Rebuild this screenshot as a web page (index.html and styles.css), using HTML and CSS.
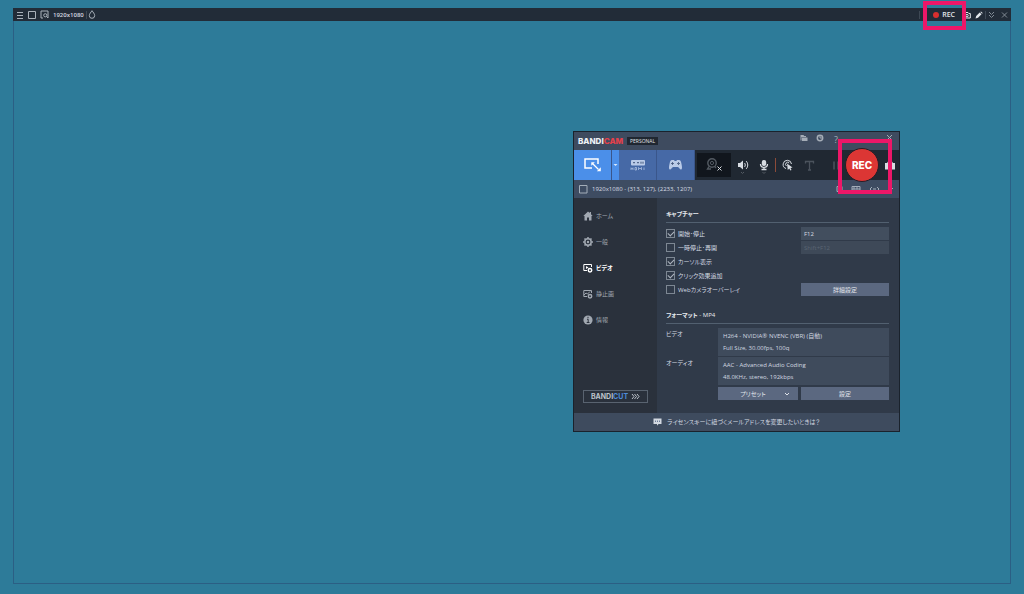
FILE: index.html
```html
<!DOCTYPE html>
<html lang="ja">
<head>
<meta charset="utf-8">
<title>Bandicam</title>
<link rel="stylesheet" href="styles.css">
</head>
<body>
<main class="desktop">
  <section class="capture">
    <header class="bar">
      <button class="ib" aria-label="メニュー"><svg width="8" height="8" viewBox="0 0 8 8"><path d="M1 1.500h6M1 4.500h6M1 7.500h6"/></svg></button>
      <button class="ib" aria-label="領域"><svg width="8" height="8" viewBox="0 0 8 8"><path d="M.5.500h7v7h-7z"/></svg></button>
      <button class="ib" aria-label="拡大"><svg width="9" height="9" viewBox="0 0 9 9"><path d="M3 8H1V1h7v7M6.500 6.500L8 8"/><circle cx="5.300" cy="5.300" r="1.600"/></svg></button>
      <span class="size">1920x1080</span>
      <i class="sep tight"></i>
      <button class="ib" aria-label="不透明度"><svg width="8" height="9" viewBox="0 0 8 9"><path d="M4 .7C3 2.300 1.300 3.800 1.300 5.600a2.700 2.700 0 0 0 5.400 0C6.700 3.800 5 2.300 4 .7z"/></svg></button>
      <span class="grow"></span>
      <i class="sep"></i>
      <button class="rec-small"><i class="dot"></i>REC</button>
      <button class="ib bright" aria-label="スクリーンショット"><svg width="8" height="8" viewBox="0 0 8 8"><path d="M.7 2.500h1.500l.8-1h2l.8 1h1.500V7H.7z"/><circle cx="4" cy="4.600" r="1.200"/></svg></button>
      <button class="ib bright" aria-label="描画"><svg class="solid" width="8" height="8" viewBox="0 0 8 8"><path d="M.5 7.500L1.200 5l3.500-3.500 1.800 1.800L3 6.800zM5.300 1L6 .4l1.700 1.700-.6.700z"/></svg></button>
      <i class="sep tight"></i>
      <button class="ib dim" aria-label="折りたたむ"><svg width="7" height="8" viewBox="0 0 7 8"><path d="M1 1l2.500 2.500L6 1M1 4l2.500 2.500L6 4"/></svg></button>
      <button class="ib dim" aria-label="閉じる"><svg width="7" height="8" viewBox="0 0 7 8"><path d="M1 1.500l5 5M6 1.500l-5 5"/></svg></button>
    </header>
  </section>

  <section class="app">
    <header class="title">
      <b class="logo">BANDI<span class="red">CAM</span></b>
      <span class="badge">PERSONAL</span>
      <span class="grow"></span>
      <button class="ib" aria-label="フォルダー"><svg class="solid" width="8" height="8" viewBox="0 0 8 8"><path d="M.5 1h3l.7 1H6v1H1.500v3.500h-1zM2 3.500h5.500V7H2z"/></svg></button>
      <button class="ib" aria-label="履歴"><svg width="8" height="8" viewBox="0 0 8 8"><circle cx="4" cy="4" r="2.700" stroke-width="1.500"/><path d="M4 2v2h2"/></svg></button>
      <button class="ib help" aria-label="ヘルプ">?</button>
      <button class="ib close" aria-label="閉じる"><svg width="7" height="7" viewBox="0 0 7 7"><path d="M1 1l5 5M6 1L1 6"/></svg></button>
    </header>

    <nav class="tools">
      <button class="mode on" aria-label="画面録画"><svg width="18" height="14" viewBox="0 0 18 14"><path stroke-width="1.500" d="M8 10H1V1h13v5"/><path stroke-width="1.300" d="M8.500 5.500l6 6"/><path class="fill" d="M7.300 4.300h3.500L7.300 7.800zM16.800 13.300h-4l4-4z"/></svg></button>
      <button class="drop" aria-label="録画モード"><svg width="5" height="4" viewBox="0 0 5 4"><path class="fill" d="M.5 1h4L2.500 3z"/></svg></button>
      <button class="mode" aria-label="HDMI"><svg width="16" height="12" viewBox="0 0 16 12"><rect class="fill" x="1" y="1" width="14" height="5.500" rx="1"/><path class="ink" d="M3 3.700h2M7 3.700h2M11 2.700v2M13 2.700v2"/><path stroke-width=".7" d="M1 8.500v2.500M3 8.500v2.500M1 9.700h2M5 8.500v2.500h1.500v-2.500zM8.500 11V8.500L10 10l1.500-1.500V11M14 8.500V11"/></svg></button>
      <button class="mode" aria-label="ゲーム録画"><svg width="15" height="12" viewBox="0 0 15 12"><path class="fill" d="M4 1h2l.7 1h1.600L9 1h2c1.500 0 2 1.500 2.500 4 .5 2 .9 5-.2 5.500C12 11 10.800 8 10 8H5c-.8 0-2 3-3.300 2.500C.6 10 1 7 1.500 5 2 2.500 2.500 1 4 1z"/><path class="ink" stroke-width=".8" d="M4.500 3v3M3 4.500h3M9 4.500h1M11 4.500h1M10.500 3v3"/></svg></button>
      <span class="strip">
        <button class="cam" aria-label="Webカメラ"><svg width="18" height="16" viewBox="0 0 18 16"><g class="gray"><circle cx="7" cy="6" r="4.200" stroke-width="1.400"/><circle cx="7" cy="6" r="1.600"/><path stroke-width="1.400" d="M4 9.500L2.500 12H6M9.800 9.500L11 11"/></g><path d="M12.500 9.500l4 4M16.500 9.500l-4 4"/></svg></button>
        <button class="ib" aria-label="スピーカー"><svg width="12" height="20" viewBox="0 0 12 20"><path class="fill" d="M1 8h2l3-2.500v9L3 12H1z"/><path d="M7.500 8c1 1 1 3 0 4M9 6c2.300 2 2.300 6 0 8"/><path class="gray" d="M4 17l1.500 1.500L7 17"/></svg></button>
        <button class="ib" aria-label="マイク"><svg width="10" height="20" viewBox="0 0 10 20"><rect class="fill" x="2.800" y="5" width="4.400" height="6" rx="2"/><path stroke-width="1.300" d="M1.500 9c0 4.500 7 4.500 7 0M5 12.500v2M2.500 14.500h5"/><path class="gray" d="M3.500 17L5 18.500 6.500 17"/></svg></button>
        <i class="sep meter"></i>
        <button class="ib" aria-label="マウス効果"><svg width="12" height="12" viewBox="0 0 12 12"><path d="M4 9.500A4.200 4.200 0 1 1 9.500 5M4.500 7a2 2 0 1 1 2.600-3"/><path class="fill" d="M5 4.500l5.500 4-2 .4 1 2-1.200.6-1-2L5.800 11z"/></svg></button>
        <button class="ib faint" aria-label="テキスト"><svg width="11" height="11" viewBox="0 0 11 11"><path stroke-width="1.300" d="M1.500 3.500v-2h8v2M5.500 1.500V10M4 10h3"/></svg></button>
        <button class="ib faint pause" aria-label="一時停止"><svg width="8" height="11" viewBox="0 0 8 11"><path stroke-width="1.500" d="M2 1.500v8M6 1.500v8"/></svg></button>
        <button class="rec">REC</button>
        <button class="ib shot" aria-label="静止画"><svg width="12" height="11" viewBox="0 0 12 11"><path class="fill" d="M1 3h2l1-1.500h4L9 3h2v6.500H1z"/><circle class="hole" cx="6" cy="6" r="2"/></svg></button>
      </span>
    </nav>

    <div class="info">
      <svg class="line" width="9" height="9" viewBox="0 0 9 9"><path d="M.5.500h7.500V8H.5z"/></svg>
      <span>1920x1080 - (313, 127), (2233, 1207)</span>
      <span class="grow"></span>
      <svg class="line" width="7" height="8" viewBox="0 0 7 8"><path d="M1 1.500h5v5H1z"/></svg>
      <svg class="line" width="10" height="8" viewBox="0 0 10 8"><path d="M1 1.500h8v5H1zM3 1.500v3M6 1.500v3M1 4h8"/></svg>
      <svg class="line" width="11" height="8" viewBox="0 0 11 8"><path d="M3 2L1 4l2 2M8 2l2 2-2 2M4 4h3"/></svg>
      <svg class="line" width="6" height="8" viewBox="0 0 6 8"><path d="M1 3l2 2 2-2"/></svg>
    </div>

    <div class="body">
      <aside class="side">
        <a href="#home"><svg width="10" height="10" viewBox="0 0 10 10"><path class="fill" d="M5 .5L.3 5h1.200v4.500h2.500V6.500h2v3h2.500V5h1.200L8 3.300V1H6.800v1.100z"/></svg>ホーム</a>
        <a href="#general"><svg width="10" height="10" viewBox="0 0 10 10"><circle stroke-width="1.500" cx="5" cy="5" r="3.200"/><circle class="fill" cx="5" cy="5" r="1.200"/><path stroke-width="1.500" d="M5 0v1.500M5 8.500V10M0 5h1.500M8.500 5H10M1.500 1.500l1 1M7.500 7.500l1 1M8.500 1.500l-1 1M2.500 7.500l-1 1"/></svg>一般</a>
        <a href="#video" class="current"><svg width="10" height="10" viewBox="0 0 10 10"><path d="M4 7.500H.8v-6h7.700V4"/><path class="fill" d="M3 3l2.500 1.500L3 6z"/><circle stroke-width="1.500" cx="7" cy="7.300" r="1.700"/></svg>ビデオ</a>
        <a href="#image"><svg width="10" height="10" viewBox="0 0 10 10"><path d="M4 7.500H.8v-6h7.700V4M1 6l2-2 1.500 1L7 2.500"/><circle stroke-width="1.500" cx="7" cy="7.300" r="1.700"/></svg>静止画</a>
        <a href="#about"><svg width="10" height="10" viewBox="0 0 10 10"><circle class="fill" cx="5" cy="5" r="4.600"/><path class="ink" d="M5 1.800v1.400M4 4.300h1.200v3.200M3.700 7.500h2.800"/></svg>情報</a>
        <button class="cut"><b>BANDI<span class="blue">CUT</span></b><svg width="9" height="7" viewBox="0 0 9 7"><path d="M1 1l2 2.500L1 6M3.500 1l2 2.500-2 2.500M6 1l2 2.500L6 6"/></svg></button>
      </aside>

      <div class="content">
        <h2>キャプチャー</h2>
        <div class="capgrid">
          <label><input type="checkbox" checked>開始･停止</label>
          <input class="field" type="text" value="F12" aria-label="開始･停止キー">
          <label><input type="checkbox">一時停止･再開</label>
          <input class="field" type="text" value="Shift+F12" disabled aria-label="一時停止キー">
          <label class="wide"><input type="checkbox" checked>カーソル表示</label>
          <label class="wide"><input type="checkbox" checked>クリック効果追加</label>
          <label><input type="checkbox">Webカメラオーバーレイ</label>
          <button class="btn">詳細設定</button>
        </div>

        <h2>フォーマット<span class="plain"> - MP4</span></h2>
        <dl class="format">
          <dt>ビデオ</dt>
          <dd>H264 - NVIDIA® NVENC (VBR) (自動)<br>Full Size, 30.00fps, 100q</dd>
          <dt>オーディオ</dt>
          <dd>AAC - Advanced Audio Coding<br>48.0KHz, stereo, 192kbps</dd>
        </dl>
        <div class="actions">
          <button class="btn preset">プリセット<svg width="6" height="4" viewBox="0 0 6 4"><path d="M1 1l2 2 2-2"/></svg></button>
          <button class="btn">設定</button>
        </div>
      </div>
    </div>

    <footer class="foot">
      <svg width="9" height="8" viewBox="0 0 9 8"><path class="fill" d="M.5.500h8V6H5.500L4 7.700V6H.5z"/><path class="ink" d="M2 3.200h1M4 3.200h1M6 3.200h1"/></svg>
      <a href="#license">ライセンスキーに紐づくメールアドレスを変更したいときは？</a>
    </footer>
    <i class="mark mark-app"></i>
  </section>
  <i class="mark mark-bar"></i>
</main>
</body>
</html>
```

FILE: styles.css
```css
* { box-sizing: border-box; }
body {
  margin: 0;
  background: #2d7b99;
  color: #d3d9e1;
  font: 6px/12px "Open Sans", "Noto Sans CJK JP", sans-serif;
  font-feature-settings: "palt";
}
button, input {
  font: inherit;
  font-feature-settings: inherit;
  color: inherit;
  margin: 0;
  padding: 0;
  border: 0;
  background: none;
}
a { color: inherit; text-decoration: none; }
svg { display: block; flex: none; fill: none; stroke: currentColor; stroke-width: 1; }
.fill, .solid { fill: currentColor; stroke: none; }
.hole { fill: #202832; stroke: none; }
.ink { stroke: #3d5277; }
.gray { stroke: #535a62; }
.grow { flex: 1; }

.desktop { position: relative; min-height: 100vh; padding: 8px 13px 10px; display: flex; }
.capture { flex: 1; border: 1px solid #2b5f84; border-top: 0; }
.bar {
  display: flex;
  align-items: center;
  gap: 4px;
  height: 13px;
  margin: 0 -1px;
  padding: 0 2px 0 3px;
  background: #222c38;
  color: #a9b1ba;
}
.ib { display: flex; align-items: center; justify-content: center; flex: none; }
.size { font-weight: 600; color: #d5dae0; }
.sep { width: 1px; height: 8px; background: #3d4854; }
.tight { margin: 0 -3px 0 -2px; }
.dim { color: #818a94; }
.dim svg { margin: 0 1px; }
.bright { color: #e4e8ec; }
.rec-small { display: flex; align-items: center; gap: 3px; padding: 0 4px 0 9px; font: 600 7px/12px "Open Sans", sans-serif; color: #e4e8ec; }
.dot { width: 6px; height: 6px; border-radius: 50%; background: #d92f2f; }

.app {
  position: absolute;
  left: 573px;
  top: 131px;
  width: 327px;
  border: 1px solid #1a222c;
  background: #303a49;
}
.title { display: flex; align-items: center; height: 18px; padding: 0 6px 0 4px; background: #3e4b5f; gap: 8px; }
.title .ib { color: #a5adb7; align-self: flex-start; margin-top: 2px; }
.title .help { font-size: 9px; width: 8px; }
.title .close { margin-left: 38px; }
.logo { font: 800 8px/12px Inter, sans-serif; color: #eef1f5; }
.red { color: #e5404a; }
.badge { margin-left: -4px; padding: 0 3px; font: 5px/8px "Open Sans", sans-serif; color: #e0e4e9; background: #202731; }

.tools { display: flex; height: 30px; background: #202832; color: #d7dce2; }
.mode { flex: none; width: 38px; display: grid; place-items: center; background: #4669a6; color: #bacbe8; border-right: 1px solid #3a568b; }
.mode.on { background: #4b8fe9; color: #fff; }
.drop { flex: none; width: 7px; display: grid; place-items: center; background: #4b8fe9; color: #d9e8fc; }
.strip { flex: 1; display: flex; align-items: center; gap: 10px; padding: 0 3px 0 2px; }
.cam { flex: none; width: 34px; height: 24px; display: grid; place-items: center; background: #11161d; margin-right: -4px; }
.meter { flex: none; background: #8c4b39; height: 14px; margin: 0 -4px; }
.faint { color: #4b535d; }
.pause { margin-left: auto; }
.rec { width: 34px; height: 34px; margin: -2px -5px; border: 1px solid #251d27; border-radius: 50%; background: #dc3634; color: #fff; font: 800 10px/30px Inter, sans-serif; flex: none; z-index: 1; }

.info { display: flex; align-items: center; gap: 4px; height: 18px; padding: 0 5px; background: #3e4c62; color: #d9dee5; }
.line { color: #a3adb9; }
.info .line + .line { margin-left: 4px; }

.body { display: flex; }
.side { width: 83px; padding: 5px 9px 10px; display: flex; flex-direction: column; background: #2a313c; color: #a1a8b1; }
.side .ink { stroke: #2a313c; }
.side a { display: flex; align-items: center; gap: 3px; height: 26px; }
.side .current { color: #fff; font-weight: 700; }
.cut { display: flex; align-items: center; justify-content: center; gap: 3px; height: 13px; width: 65px; margin-top: auto; border: 1px solid #596370; color: #bdc3cb; }
.cut b { font: 700 7px/10px Inter, sans-serif; }
.blue { color: #4d8bd9; }

.content { flex: 1; min-width: 0; padding: 10px 10px 13px 9px; }
h2 { margin: 0 0 4px; padding-bottom: 2px; border-bottom: 1px solid #526070; font-size: 6px; line-height: 12px; color: #e7ebef; }
.plain { font-weight: 400; }
.capgrid { display: grid; grid-template-columns: 1fr 88px; column-gap: 4px; row-gap: 1px; margin-bottom: 13px; }
.capgrid > * { height: 13px; }
label { display: flex; align-items: center; gap: 3px; white-space: nowrap; }
.wide { grid-column: 1 / -1; }
label input { appearance: none; width: 9px; height: 9px; border: 1px solid #7d8793; display: grid; place-items: center; }
label input:checked::before { content: ""; width: 5px; height: 3px; margin-bottom: 1px; border: solid #aeb6c0; border-width: 0 0 1px 1px; rotate: -45deg; }
.field { min-width: 0; padding: 0 3px; background: #424e5e; color: #d7dce2; }
.field:disabled { background: #3e4958; color: #5b6674; }
.btn { height: 13px; background: #5b6880; color: #e0e4ea; display: flex; align-items: center; justify-content: center; }
.format { display: grid; grid-template-columns: 52px 1fr; row-gap: 1px; margin: 0 0 2px; }
.format dd { margin: 0; padding: 2px 5px; background: #3f4b5c; white-space: nowrap; }
.actions { display: grid; grid-template-columns: 80px 88px; justify-content: end; gap: 3px; }
.preset { padding-left: 14px; gap: 18px; }
.foot { display: flex; align-items: center; justify-content: center; gap: 5px; height: 18px; background: #3e4b5e; }

.mark { position: absolute; border: 4px solid #ed1768; z-index: 2; }
.mark-app { left: 264px; top: 7px; width: 54px; height: 55px; }
.mark-bar { right: 58px; top: 1px; width: 43px; height: 29px; }
```
